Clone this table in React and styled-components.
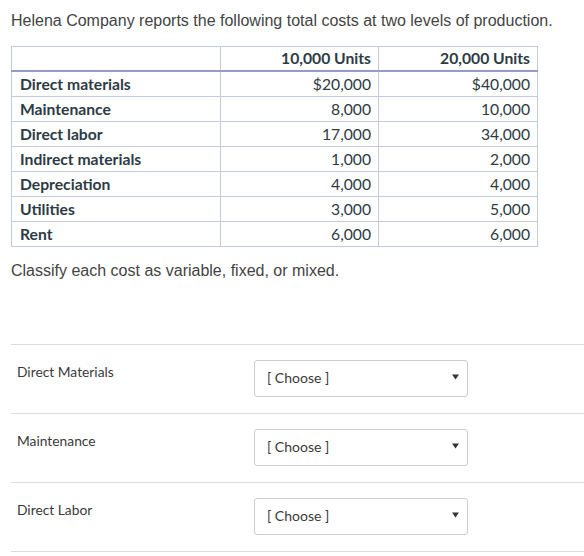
import React from "react";
import styled, { createGlobalStyle } from "styled-components";

const GlobalStyle = createGlobalStyle`
  html, body {
    margin: 0;
    padding: 0;
    background: #ffffff;
    overflow: hidden;
  }
`;

const Page = styled.div`
  width: 584px;
  height: 556px;
  padding: 11px 0 0 11px;
  box-sizing: border-box;
`;

const Prompt = styled.p`
  margin: 0;
  font-family: "Liberation Sans", Arial, sans-serif;
  font-size: 16px;
  line-height: 20px;
  color: #444444;
`;

const CostTable = styled.table`
  margin-top: 15px;
  border-collapse: collapse;
  table-layout: fixed;
  font-family: Lato, "Noto Sans", sans-serif;
  font-size: 15.7px;
  color: #2d3b45;
  border: 1px solid #c5c8e2;
`;

const HeadCell = styled.th`
  height: 24px;
  padding: 0 7px 0 8px;
  text-align: right;
  font-weight: 700;
  border: 1px solid #c5c8e2;
  border-bottom: 2px solid #959cc9;
  width: ${(p) => p.$w}px;
  box-sizing: border-box;
  white-space: nowrap;
`;

const Cell = styled.td`
  height: 24px;
  padding: 0 7px 0 8px;
  border: 1px solid #c5c8e2;
  text-align: ${(p) => (p.$label ? "left" : "right")};
  font-weight: ${(p) => (p.$label ? 700 : 400)};
  line-height: 24px;
  white-space: nowrap;
`;

const Questions = styled.div`
  margin-top: 63px;
  border-top: 1px solid #dcdcdc;
`;

const QuestionRow = styled.div`
  display: flex;
  align-items: flex-start;
  height: 69px;
  box-sizing: border-box;
  padding-top: 15px;
  border-bottom: 1px solid #dcdcdc;
`;

const QuestionLabel = styled.div`
  width: 243px;
  padding: 3px 0 0 6px;
  box-sizing: border-box;
  font-family: Lato, "Noto Sans", sans-serif;
  font-size: 13.8px;
  line-height: 18px;
  color: #3a3a3a;
`;

const Dropdown = styled.div`
  width: 214px;
  height: 37px;
  box-sizing: border-box;
  border: 1px solid #cccccc;
  border-radius: 3px;
  background: #ffffff;
  display: flex;
  align-items: center;
  justify-content: space-between;
  padding: 0 8px 2px 12px;
  font-family: Lato, "Noto Sans", sans-serif;
  font-size: 14px;
  color: #3a3a3a;
`;

const costs = [
  ["Direct materials", "$20,000", "$40,000"],
  ["Maintenance", "8,000", "10,000"],
  ["Direct labor", "17,000", "34,000"],
  ["Indirect materials", "1,000", "2,000"],
  ["Depreciation", "4,000", "4,000"],
  ["Utilities", "3,000", "5,000"],
  ["Rent", "6,000", "6,000"],
];

const items = ["Direct Materials", "Maintenance", "Direct Labor"];

function Caret() {
  return (
    <svg width="7" height="6" viewBox="0 0 7 6">
      <path d="M0 0.5 H7 L3.5 5.5 Z" fill="#333" />
    </svg>
  );
}

export default function App() {
  return (
    <Page>
      <GlobalStyle />
      <Prompt>Helena Company reports the following total costs at two levels of production.</Prompt>
      <CostTable>
        <thead>
          <tr>
            <HeadCell $w={209} />
            <HeadCell $w={158}>10,000 Units</HeadCell>
            <HeadCell $w={159}>20,000 Units</HeadCell>
          </tr>
        </thead>
        <tbody>
          {costs.map(([name, a, b]) => (
            <tr key={name}>
              <Cell $label>{name}</Cell>
              <Cell>{a}</Cell>
              <Cell>{b}</Cell>
            </tr>
          ))}
        </tbody>
      </CostTable>
      <Prompt style={{ marginTop: 14 }}>Classify each cost as variable, fixed, or mixed.</Prompt>
      <Questions>
        {items.map((item) => (
          <QuestionRow key={item}>
            <QuestionLabel>{item}</QuestionLabel>
            <Dropdown>
              <span>[ Choose ]</span>
              <Caret />
            </Dropdown>
          </QuestionRow>
        ))}
      </Questions>
    </Page>
  );
}
